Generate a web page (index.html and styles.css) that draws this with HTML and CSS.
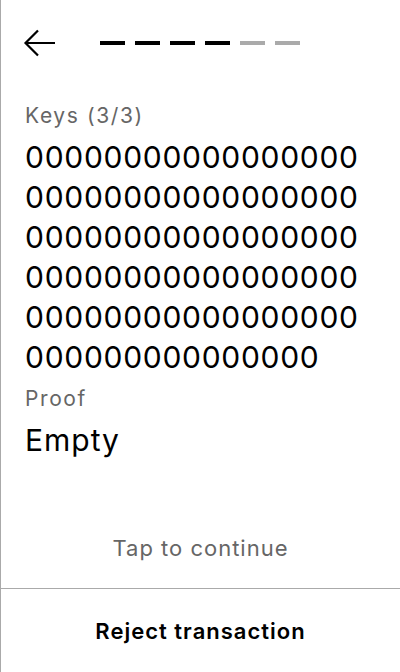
FILE: index.html
```html
<!DOCTYPE html>
<html>
<head>
<meta charset="utf-8">
<link rel="stylesheet" href="styles.css">
</head>
<body>
<div class="screen">
  <header class="header">
    <button class="back" aria-label="Back">
      <svg width="34" height="30" viewBox="0 0 34 30">
        <path d="M32 15H3M15 2.5L2.5 15L15 27.5" fill="none" stroke="#000" stroke-width="2.2"/>
      </svg>
    </button>
    <div class="progress">
      <span class="step done"></span>
      <span class="step done"></span>
      <span class="step done"></span>
      <span class="step done"></span>
      <span class="step"></span>
      <span class="step"></span>
    </div>
  </header>
  <main class="content">
    <div class="label">Keys (3/3)</div>
    <div class="value keys">0000000000000000000000000000000000000000000000000000000000000000000000000000000000000000000000000000</div>
    <div class="label">Proof</div>
    <div class="value empty">Empty</div>
  </main>
  <div class="tap">Tap to continue</div>
  <footer class="footer">
    <button class="reject">Reject transaction</button>
  </footer>
</div>
</body>
</html>
```
FILE: styles.css
```css
* { box-sizing: border-box; }
html, body { margin: 0; padding: 0; background: #fff; }
body { font-family: Inter, "Noto Sans", sans-serif; color: #000; }
.screen {
  width: 400px;
  height: 672px;
  border-left: 1px solid #aaa;
  display: flex;
  flex-direction: column;
}
.header {
  display: flex;
  align-items: center;
  height: 86px;
  padding: 0 0 0 22px;
}
.back {
  border: 0;
  background: none;
  padding: 0;
  width: 34px;
  height: 30px;
  display: flex;
}
.progress {
  display: flex;
  gap: 10px;
  margin-left: 43px;
}
.step {
  width: 25px;
  height: 4px;
  background: #aaa;
}
.step.done { background: #000; }
.content {
  flex: 1;
  padding: 16px 30px 0 24px;
}
.label {
  font-size: 21px;
  line-height: 28px;
  letter-spacing: 1.6px;
  color: #666;
  margin-bottom: 7px;
}
.value {
  font-size: 30px;
  line-height: 40px;
  letter-spacing: 0.7px;
  word-break: break-all;
}
.keys { margin-bottom: 8px; }
.empty { margin-top: 4px; letter-spacing: 1px; }
.tap {
  text-align: center;
  font-size: 22px;
  line-height: 30px;
  letter-spacing: 1px;
  color: #666;
  padding-bottom: 25px;
}
.footer {
  border-top: 1px solid #aaa;
  height: 84px;
  display: flex;
}
.reject {
  flex: 1;
  border: 0;
  padding: 0;
  background: none;
  font-family: inherit;
  font-size: 22px;
  line-height: 30px;
  letter-spacing: 1px;
  font-weight: 600;
  color: #000;
}
```
